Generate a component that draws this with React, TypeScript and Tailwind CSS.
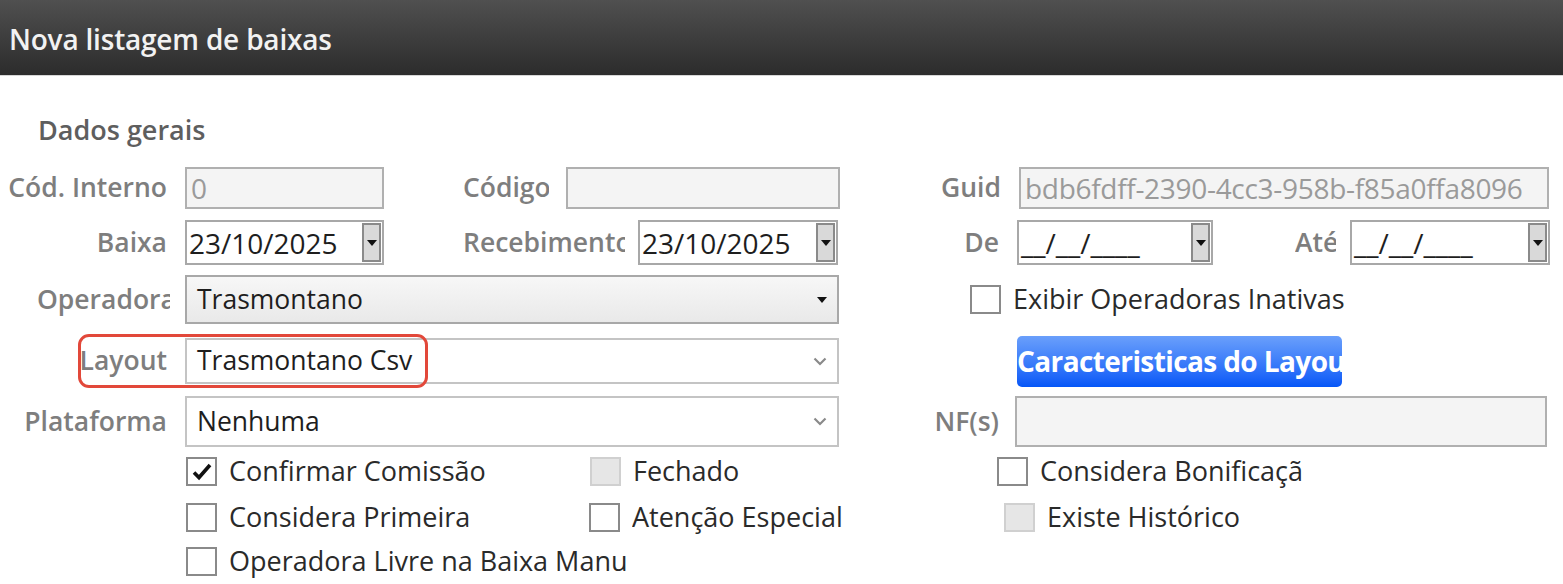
import React from 'react';

const Arrow = () => (
  <svg width="10" height="8" viewBox="0 0 10 8">
    <path d="M0 1h10L5 7z" fill="#111" />
  </svg>
);

const Chevron = () => (
  <svg width="14" height="9" viewBox="0 0 14 9">
    <path d="M1.5 1.5L7 7l5.5-5.5" stroke="#8a8a8a" strokeWidth="2.2" fill="none" />
  </svg>
);

const Label: React.FC<{ text: string; className?: string }> = ({ text, className }) => (
  <div className={`overflow-hidden whitespace-nowrap text-right text-[26.5px] font-semibold text-[#7e7e7e] ${className ?? ''}`}>
    {text}
  </div>
);

const TextBox: React.FC<{ value?: string; className?: string; muted?: boolean }> = ({ value, className, muted }) => (
  <div
    className={`flex h-full items-center overflow-hidden whitespace-nowrap border-2 border-[#b0b0b0] bg-[#f4f4f4] pl-[4px] text-[28px] tracking-[-0.3px] ${
      muted ? 'text-[#9a9a9a]' : 'text-[#1e1e1e]'
    } ${className ?? ''}`}
  >
    {value}
  </div>
);

const DateBox: React.FC<{ value: string; className?: string }> = ({ value, className }) => (
  <div className={`flex h-full border-2 border-[#a8a8a8] bg-white ${className ?? ''}`}>
    <div className="flex flex-1 items-center overflow-hidden whitespace-nowrap pl-[2px] text-[28px] text-[#1e1e1e]">
      {value}
    </div>
    <div className="my-[1px] mr-[1px] flex w-[19px] items-center justify-center border-2 border-[#8a8a8a] bg-[#d9d9d9]">
      <Arrow />
    </div>
  </div>
);

const Combo: React.FC<{ value: string; kind: 'solid' | 'chevron' }> = ({ value, kind }) => (
  <div
    className={`flex h-full w-[654px] items-center border-2 pl-[10px] pr-[10px] text-[26.5px] text-[#1e1e1e] ${
      kind === 'solid'
        ? 'border-[#a8a8a8] bg-gradient-to-b from-[#f7f7f7] to-[#e9e9e9]'
        : 'border-[#c4c4c4] bg-white'
    }`}
  >
    <span className="flex-1 whitespace-nowrap">{value}</span>
    {kind === 'solid' ? <Arrow /> : <Chevron />}
  </div>
);

const Check: React.FC<{ label: string; checked?: boolean; disabled?: boolean; className?: string; labelClass?: string }> = ({
  label,
  checked,
  disabled,
  className,
  labelClass,
}) => (
  <div className={`flex items-center ${className ?? ''}`}>
    <div
      className={`flex h-[29px] w-[31px] shrink-0 items-center justify-center border-2 ${
        disabled ? 'border-[#d0d0d0] bg-[#e6e6e6]' : 'border-[#8a8a8a] bg-white'
      }`}
    >
      {checked && (
        <svg width="20" height="18" viewBox="0 0 20 18">
          <path d="M2 9.5l5 5L18 2" stroke="#111" strokeWidth="3.6" fill="none" />
        </svg>
      )}
    </div>
    <span className={`ml-[12px] overflow-hidden whitespace-nowrap text-[27px] text-[#2a2a2a] ${labelClass ?? ''}`}>
      {label}
    </span>
  </div>
);

export default function App() {
  return (
    <div className="h-[584px] w-[1563px] overflow-hidden bg-white font-['Open_Sans',sans-serif] text-[27px]">
      <div className="flex h-[76px] items-center border-b border-[#d6d6d6] bg-gradient-to-b from-[#505050] to-[#2c2c2c] pl-[9px] pt-[3px] text-[28px] font-semibold tracking-[-0.2px] text-[#f2f2f2]">
        Nova listagem de baixas
      </div>

      <div className="ml-[38px] mt-[37px] h-[34px] text-[27px] font-semibold leading-[34px] text-[#5e5e5e]">
        Dados gerais
      </div>

      {/* linha 1 */}
      <div className="mt-[20px] flex h-[42px] items-center">
        <Label text="Cód. Interno" className="w-[170px] pr-[3px]" />
        <TextBox value="0" muted className="ml-[15px] w-[199px]" />
        <Label text="Código" className="ml-[79px] w-[86px]" />
        <TextBox className="ml-[17px] w-[274px]" />
        <Label text="Guid" className="w-[164px] pr-[3px]" />
        <TextBox value="bdb6fdff-2390-4cc3-958b-f85a0ffa8096" muted className="ml-[15px] w-[530px]" />
      </div>

      {/* linha 2 */}
      <div className="mt-[11px] flex h-[45px] items-center">
        <Label text="Baixa" className="w-[170px] pr-[3px]" />
        <DateBox value="23/10/2025" className="ml-[15px] w-[199px]" />
        <Label text="Recebimento" className="ml-[79px] w-[162px]" />
        <DateBox value="23/10/2025" className="ml-[13px] w-[200px]" />
        <Label text="De" className="w-[164px] pr-[3px]" />
        <DateBox value="__/__/____" className="ml-[15px] w-[196px]" />
        <Label text="Até" className="ml-[82px] w-[41px]" />
        <DateBox value="__/__/____" className="ml-[14px] w-[200px]" />
      </div>

      {/* linha 3 */}
      <div className="mt-[10px] flex h-[49px] items-center">
        <Label text="Operadora" className="ml-[37px] w-[133px]" />
        <div className="ml-[15px] h-full">
          <Combo value="Trasmontano" kind="solid" />
        </div>
        <Check label="Exibir Operadoras Inativas" className="ml-[131px]" />
      </div>

      {/* linha 4 */}
      <div className="relative mt-[14px] flex h-[46px] items-center">
        <Label text="Layout" className="w-[170px] pr-[3px]" />
        <div className="ml-[15px] h-full">
          <Combo value="Trasmontano Csv" kind="chevron" />
        </div>
        <button className="ml-[178px] h-[51px] w-[325px] shrink-0 overflow-hidden whitespace-nowrap rounded-[5px] bg-gradient-to-b from-[#6a9ffb] to-[#0456f7] text-left text-[28px] font-bold tracking-[-0.6px] text-white">
          Caracteristicas do Layout
        </button>
        <div className="absolute left-[78px] top-[-4px] h-[54px] w-[350px] rounded-[11px] border-[3px] border-[#e2483a]" />
      </div>

      {/* linha 5 */}
      <div className="mt-[12px] flex h-[51px] items-center">
        <Label text="Plataforma" className="w-[170px] pr-[3px]" />
        <div className="ml-[15px] h-full">
          <Combo value="Nenhuma" kind="chevron" />
        </div>
        <Label text="NF(s)" className="w-[163px] pr-[3px]" />
        <TextBox className="ml-[13px] w-[532px]" />
      </div>

      {/* checkboxes */}
      <div className="mt-[10px] flex h-[29px]">
        <Check label="Confirmar Comissão" checked className="ml-[186px] w-[404px]" />
        <Check label="Fechado" disabled className="w-[407px]" />
        <Check label="Considera Bonificação" labelClass="w-[264px]" />
      </div>
      <div className="mt-[17px] flex h-[28px]">
        <Check label="Considera Primeira" className="ml-[186px] w-[403px]" />
        <Check label="Atenção Especial" className="w-[415px]" />
        <Check label="Existe Histórico" disabled />
      </div>
      <div className="mt-[16px] flex h-[28px]">
        <Check label="Operadora Livre na Baixa Manual" className="ml-[186px]" labelClass="w-[398px]" />
      </div>
    </div>
  );
}
